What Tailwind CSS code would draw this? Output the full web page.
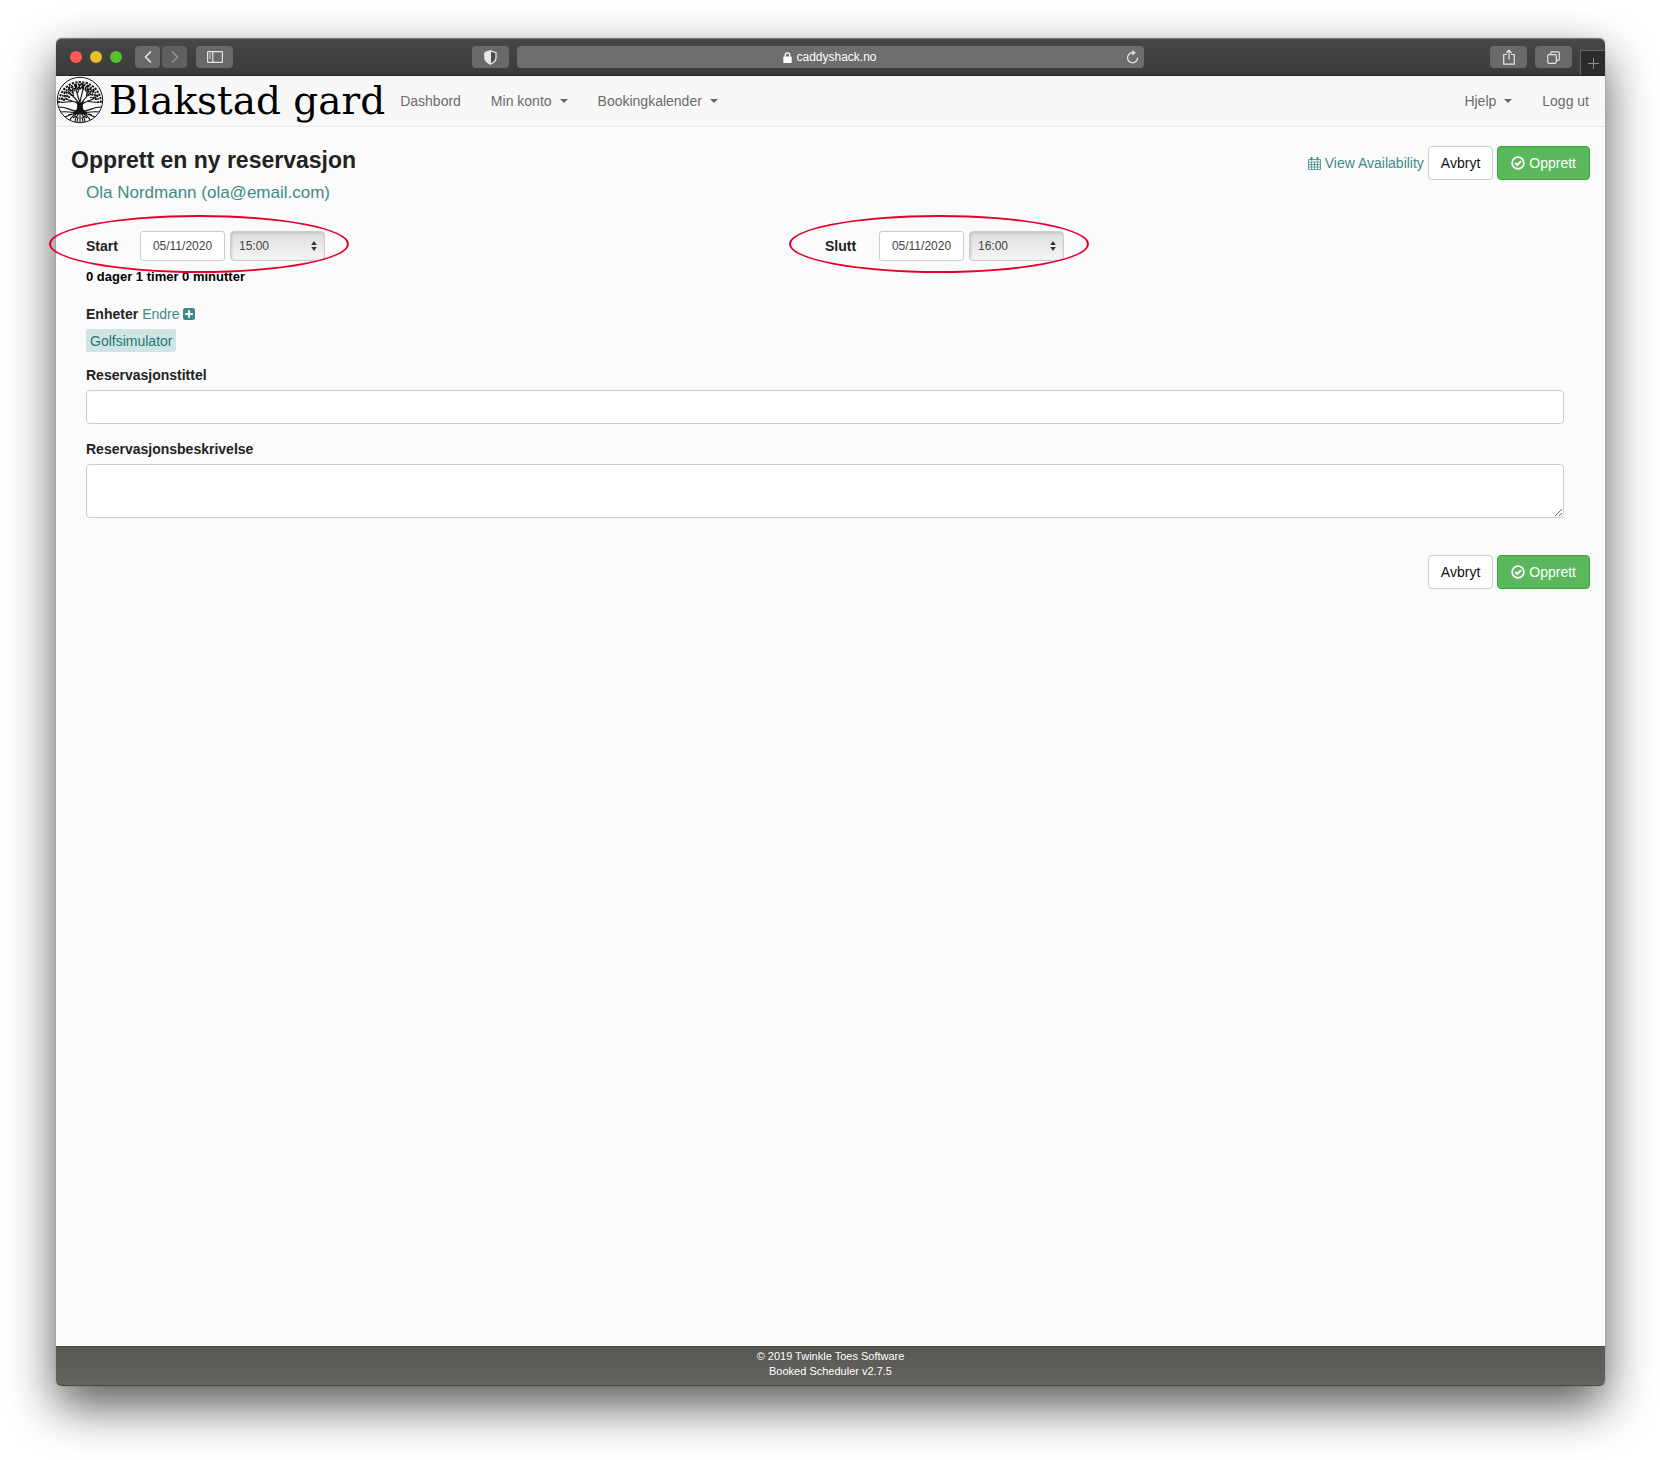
<!DOCTYPE html>
<html lang="no">
<head>
  <meta charset="UTF-8" />
  <meta name="viewport" content="width=device-width, initial-scale=1.0" />
  <title>Opprett en ny reservasjon</title>
  <script src="https://cdn.jsdelivr.net/npm/@tailwindcss/browser@4"></script>
</head>
<body class="bg-white min-h-screen flex pt-[38px] pb-[74px] pl-14 pr-[55px] font-['Helvetica_Neue','Liberation_Sans',Arial,sans-serif] text-sm leading-5 text-[#222]">
  <div class="flex-1 flex flex-col rounded-md bg-[#fbfbfb] shadow-[0_0_1px_rgba(0,0,0,0.6),0_20px_48px_rgba(0,0,0,0.65)]">

    <!-- Browser toolbar -->
    <div class="h-[38px] grid grid-cols-[1fr_40.5%_1fr] rounded-t-md border-t border-[#7c7c7c] border-b border-b-[#222] bg-linear-to-b from-[#474747] to-[#3a3a3a] text-[#e6e6e6]">
      <div class="flex items-center pl-[14px] pr-2">
        <div class="flex gap-2">
          <span class="size-3 rounded-full bg-[#ff5b51]"></span>
          <span class="size-3 rounded-full bg-[#e6bf29]"></span>
          <span class="size-3 rounded-full bg-[#54c22b]"></span>
        </div>
        <div class="flex gap-0.5 ml-[13px]">
          <button type="button" aria-label="Back" class="w-[25px] h-[22px] rounded bg-[#696969] flex items-center justify-center">
            <svg class="w-2 h-3" viewBox="0 0 8 12" fill="none" stroke="currentColor" stroke-width="1.6"><path d="M7 0.5 1.5 6 7 11.5"/></svg>
          </button>
          <button type="button" aria-label="Forward" class="w-[25px] h-[22px] rounded bg-[#606060] text-[#989898] flex items-center justify-center">
            <svg class="w-2 h-3" viewBox="0 0 8 12" fill="none" stroke="currentColor" stroke-width="1.4"><path d="M1 0.5 6.5 6 1 11.5"/></svg>
          </button>
        </div>
        <button type="button" aria-label="Sidebar" class="ml-[9px] w-[37px] h-[22px] rounded bg-[#696969] flex items-center justify-center">
          <svg class="w-4 h-3" viewBox="0 0 16 12" fill="none" stroke="currentColor"><rect x="0.6" y="0.6" width="14.8" height="10.8" rx="0.6" stroke-width="1.2"/><path d="M5.8 0.5v11" stroke-width="1.2"/><path d="M2 3h2M2 5h2M2 7h2" stroke-width="0.9"/></svg>
        </button>
        <button type="button" aria-label="Privacy report" class="ml-auto w-[37px] h-[22px] rounded bg-[#696969] flex items-center justify-center">
          <svg class="w-[13px] h-[15px]" viewBox="0 0 13 15" fill="none" stroke="currentColor"><path d="M6.5 0.8 12 2.6v5.2c0 3-2.3 5-5.5 6.4C3.3 12.8 1 10.8 1 7.8V2.6z" stroke-width="1.3" fill="#4d4d4d"/><path d="M6.5 0.8v13.4C3.3 12.8 1 10.8 1 7.8V2.6z" fill="currentColor"/></svg>
        </button>
      </div>

      <div class="flex items-center">
        <div class="flex-1 h-[22px] rounded bg-[#6d6e6d] flex items-center px-[5px] text-white text-xs">
          <span class="flex-1 flex items-center justify-center gap-1 pl-3">
            <svg class="w-[9px] h-[11px]" viewBox="0 0 9 11"><rect x="0.3" y="4.6" width="8.4" height="6.4" rx="0.8" fill="currentColor"/><path d="M2.2 5V3.2a2.3 2.3 0 0 1 4.6 0V5" fill="none" stroke="currentColor" stroke-width="1.3"/></svg>
            <span>caddyshack.no</span>
          </span>
          <button type="button" aria-label="Reload">
            <svg class="w-[13px] h-[14px]" viewBox="0 0 13 14" fill="none" stroke="#e0e0e0" stroke-width="1.3"><path d="M7 2.8a5 5 0 1 0 4.5 4.7"/><path d="M6.3 0v5.6L10 2.8z" fill="#e0e0e0" stroke="none"/></svg>
          </button>
        </div>
      </div>

      <div class="flex items-center justify-end">
        <button type="button" aria-label="Share" class="w-[37px] h-[22px] rounded bg-[#696969] flex items-center justify-center">
          <svg class="w-3 h-4" viewBox="0 0 12 16" fill="none" stroke="currentColor" stroke-width="1.2"><path d="M4 5.5H0.7v9.6h10.6V5.5H8M6 10.5V1.3M3.3 4 6 1.2 8.7 4"/></svg>
        </button>
        <button type="button" aria-label="Tabs" class="ml-2 w-[37px] h-[22px] rounded bg-[#696969] flex items-center justify-center">
          <svg class="size-[13px]" viewBox="0 0 13 13" fill="none" stroke="currentColor" stroke-width="1.2"><rect x="0.7" y="3.7" width="8.6" height="8.6" rx="1.2"/><path d="M3.7 3.5V2a1.2 1.2 0 0 1 1.2-1.2h6.2A1.2 1.2 0 0 1 12.3 2v6.2a1.2 1.2 0 0 1-1.2 1.2H9.5"/></svg>
        </button>
        <button type="button" aria-label="New tab" class="ml-2 self-end w-[25px] h-[25px] border-l border-t border-[#666] bg-[#2b2b2b] text-[#8c8c8c] flex items-center justify-center">
          <svg class="size-[11px]" viewBox="0 0 11 11" stroke="currentColor"><path d="M5.5 0v11M0 5.5h11"/></svg>
        </button>
      </div>
    </div>

    <!-- Site navigation -->
    <nav class="h-[51px] flex items-center pr-4 bg-[#f8f8f8] border-b border-[#e7e7e7] text-[#6b6b6b]">
      <a href="#" class="flex items-start gap-[5px] h-[50px] text-black">
        <svg class="size-12 shrink-0" viewBox="0 0 48 48" fill="none" stroke="#151515">
          <circle cx="24" cy="24" r="22.7" stroke-width="1"/>
          <!-- leaves -->
          <g stroke-width="1.9">
            <path d="M3 27A21 21 0 0 1 45 27" stroke-dasharray="2.2 1.3"/>
            <path d="M5.5 27A18.5 19 0 0 1 42.5 27" stroke-dasharray="1.4 1.6 2.6 1.1"/>
            <path d="M8 25A16 16 0 0 1 40 25" stroke-dasharray="2.4 1.5"/>
            <path d="M10.5 24A13.5 13.5 0 0 1 37.5 24" stroke-dasharray="1.5 1.4 2.3 1.3"/>
            <path d="M13 22A11 10.5 0 0 1 35 22" stroke-dasharray="2 1.6"/>
            <path d="M15.5 20A8.5 7.5 0 0 1 32.5 20" stroke-dasharray="1.5 1.5"/>
          </g>
          <!-- branches -->
          <path d="M23 29C21 25 15 26 9 22M23 28C21 23 16 20 12 15M24 27C22 20 20 16 19 9M24 27C25 20 27 15 28 8M25 28C28 22 32 20 36 14M25 29C29 25 33 26 40 21M16 25.5 6 26.5M32 25.5l10 1M17.5 20l-1-7M30.5 20l1-8M21 18l3-7" stroke-width="1.1"/>
          <path d="M20.500 25.500c2 1.500 2 6 .2 9.500L17 37.500l7-1 7 1-3.700-2.500c-1.800-3.500-1.800-8 .2-9.500L24.500 28z" fill="#111" stroke-width="1.6"/>
          <!-- roots -->
          <path d="M22 35C16 36 12 31 3 31M21 36c-6 1-10-1-16 0M21 37c-5 1-8 2-12 4M22 37c-4 2-7 4-8 7M23 37c-2 3-4 5-4 9M24 37v10M25 37c2 3 4 5 4 9M26 37c4 2 7 4 8 7M27 37c5 1 8 2 12 4M27 36c6 1 10-1 16 0M26 35c6 1 10-4 19-4M16 38l-4 1M32 38l4 1M20 40l-3 2M28 40l3 2M22 41l-1 5M26 41l1 5" stroke-width="1.2"/>
        </svg>
        <span class="font-['DejaVu_Serif',serif] text-[39px] leading-[50px] whitespace-nowrap">Blakstad gard</span>
      </a>
      <a href="#" class="px-[15px]">Dashbord</a>
      <a href="#" class="px-[15px] flex items-center gap-2">Min konto
        <span class="border-x-4 border-t-4 border-x-transparent border-t-[#666]"></span>
      </a>
      <a href="#" class="px-[15px] flex items-center gap-2">Bookingkalender
        <span class="border-x-4 border-t-4 border-x-transparent border-t-[#666]"></span>
      </a>
      <a href="#" class="ml-auto pr-[15px] flex items-center gap-2">Hjelp
        <span class="border-x-4 border-t-4 border-x-transparent border-t-[#666]"></span>
      </a>
      <a href="#" class="pl-[15px]">Logg ut</a>
    </nav>

    <!-- Reservation form -->
    <form class="flex-1 px-[15px] pt-[19px]">
      <div class="flex items-start justify-between">
        <h1 class="text-[23px] leading-7 font-bold">Opprett en ny reservasjon</h1>
        <div class="flex items-center gap-1">
          <a href="#" class="flex items-center gap-1 text-[#3f8a85]">
            <svg class="size-[13px]" viewBox="0 0 13 13" fill="none" stroke="currentColor"><path d="M0.5 2.5h12v10h-12zM0.5 5h12M0.5 7.5h12M0.5 10h12M3.5 5v7.5M6.5 5v7.5M9.5 5v7.5" stroke-width="0.8"/><path d="M3.5 0v3.5M9.5 0v3.5" stroke-width="1.8"/></svg>
            View Availability
          </a>
          <button type="button" class="h-[34px] px-3 rounded border border-[#ccc] bg-white text-[#111]">Avbryt</button>
          <button type="submit" class="h-[34px] px-[13px] rounded border border-[#33a833] bg-[#5cb85c] text-white flex items-center gap-1">
            <svg class="size-[14px]" viewBox="0 0 14 14" fill="none" stroke="currentColor"><circle cx="7" cy="7" r="5.9" stroke-width="1.7"/><path d="M4.2 7l2 2 3.8-3.8" stroke-width="2"/></svg>
            Opprett
          </button>
        </div>
      </div>

      <div class="pl-[15px] pr-[26px]">
        <a href="#" class="block w-fit text-[17px] leading-[26px] text-[#3f8a85]">Ola Nordmann (ola@email.com)</a>

        <div class="grid grid-cols-2 mt-[25px]">
          <div class="relative flex items-center">
            <label for="startDate" class="w-[54px] font-bold">Start</label>
            <input id="startDate" type="text" value="05/11/2020" class="w-[85px] h-[30px] rounded-[3px] border border-[#ccc] bg-white text-center text-xs text-[#444]" />
            <span class="relative ml-[5px]">
              <select aria-label="Starttid" class="appearance-none w-[95px] h-[30px] px-2 rounded border border-[#ccc] bg-linear-to-b from-[#dedede] to-[#f5f5f5] shadow-[inset_1px_1px_3px_rgba(0,0,0,0.15)] text-xs text-[#444]">
                <option>15:00</option>
              </select>
              <svg class="absolute right-2 top-2.5 w-1.5 h-2.5 pointer-events-none" viewBox="0 0 6 10" fill="#333"><path d="M3 0 5.8 4H0.2zM3 10 0.2 6h5.6z"/></svg>
            </span>
            <span class="absolute -left-[37px] -top-4 w-[300px] h-[58px] rounded-[50%] border-2 border-[#e4002b] pointer-events-none"></span>
          </div>
          <div class="relative flex items-center">
            <label for="endDate" class="w-[54px] font-bold">Slutt</label>
            <input id="endDate" type="text" value="05/11/2020" class="w-[85px] h-[30px] rounded-[3px] border border-[#ccc] bg-white text-center text-xs text-[#444]" />
            <span class="relative ml-[5px]">
              <select aria-label="Sluttid" class="appearance-none w-[95px] h-[30px] px-2 rounded border border-[#ccc] bg-linear-to-b from-[#dedede] to-[#f5f5f5] shadow-[inset_1px_1px_3px_rgba(0,0,0,0.15)] text-xs text-[#444]">
                <option>16:00</option>
              </select>
              <svg class="absolute right-2 top-2.5 w-1.5 h-2.5 pointer-events-none" viewBox="0 0 6 10" fill="#333"><path d="M3 0 5.8 4H0.2zM3 10 0.2 6h5.6z"/></svg>
            </span>
            <span class="absolute -left-9 -top-4 w-[300px] h-[58px] rounded-[50%] border-2 border-[#e4002b] pointer-events-none"></span>
          </div>
        </div>

        <p class="mt-[6px] text-[13px] font-bold text-black">0 dager 1 timer 0 minutter</p>

        <div class="mt-[17px] flex items-center gap-1">
          <span class="font-bold">Enheter</span>
          <a href="#" class="flex items-center gap-1 text-[#3f8a85]">Endre
            <svg class="size-3" viewBox="0 0 12 12"><rect width="12" height="12" rx="2.2" fill="currentColor"/><path d="M6 2.2v7.6M2.2 6h7.6" stroke="#fff" stroke-width="1.9"/></svg>
          </a>
        </div>
        <span class="block w-fit mt-[5px] px-1 h-[23px] leading-6 rounded-xs bg-[#cfe5e4] text-[#1f766f]">Golfsimulator</span>

        <label for="title" class="block mt-[13px] font-bold">Reservasjonstittel</label>
        <input id="title" type="text" class="block mt-[5px] w-full h-[34px] px-3 rounded border border-[#ccc] bg-white" />

        <label for="description" class="block mt-[15px] font-bold">Reservasjonsbeskrivelse</label>
        <textarea id="description" class="block mt-[5px] w-full h-[54px] px-3 py-1.5 rounded border border-[#ccc] bg-white"></textarea>
      </div>

      <div class="mt-[37px] flex justify-end gap-1">
        <button type="button" class="h-[34px] px-3 rounded border border-[#ccc] bg-white text-[#111]">Avbryt</button>
        <button type="submit" class="h-[34px] px-[13px] rounded border border-[#33a833] bg-[#5cb85c] text-white flex items-center gap-1">
          <svg class="size-[14px]" viewBox="0 0 14 14" fill="none" stroke="currentColor"><circle cx="7" cy="7" r="5.9" stroke-width="1.7"/><path d="M4.2 7l2 2 3.8-3.8" stroke-width="2"/></svg>
          Opprett
        </button>
      </div>
    </form>

    <footer class="h-10 pt-[2px] rounded-b-md border-t border-b border-[#484845] bg-linear-to-b from-[#585752] to-[#65645f] text-center text-[11px] leading-[15px] text-white">
      <p>© 2019 Twinkle Toes Software</p>
      <p>Booked Scheduler v2.7.5</p>
    </footer>
  </div>
</body>
</html>
